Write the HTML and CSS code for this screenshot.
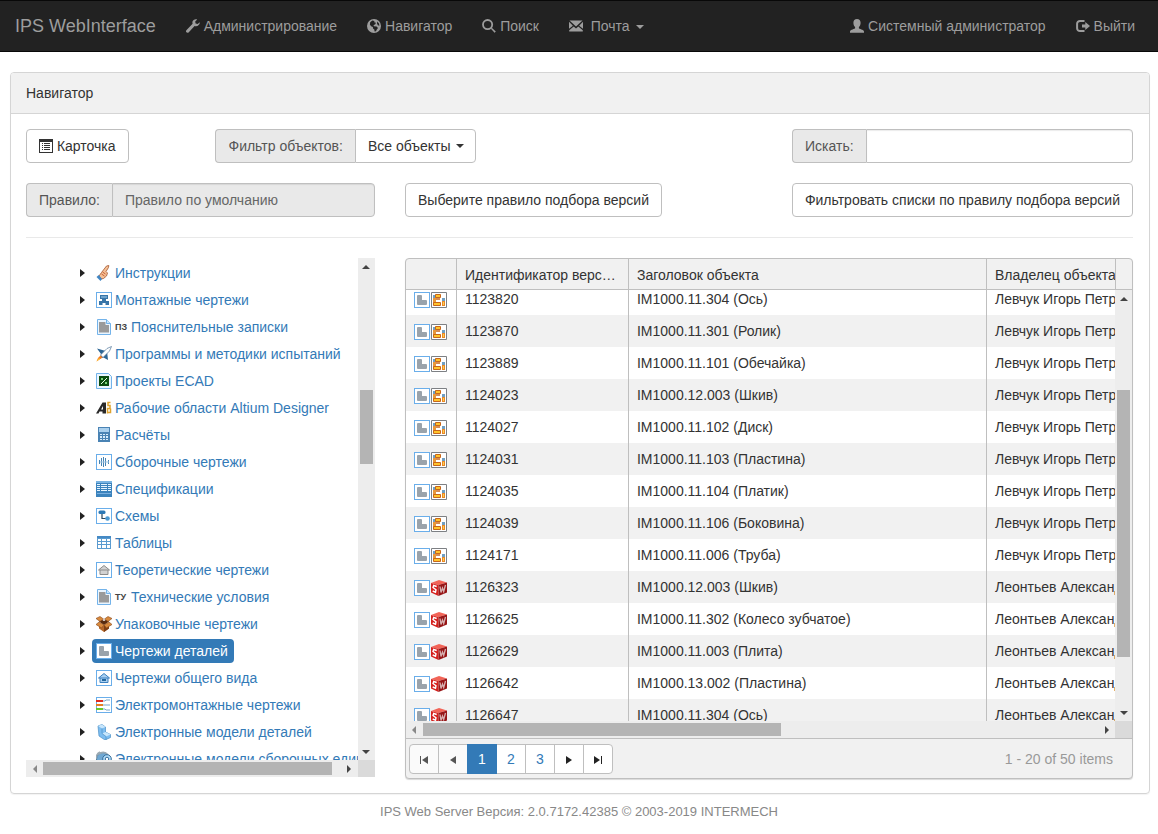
FILE: index.html
```
<!DOCTYPE html>
<html lang="ru">
<head>
    <meta charset="UTF-8">
    <meta name="viewport" content="width=device-width, initial-scale=1.0">
    <title>IPS WebInterface - Навигатор</title>
    <link rel="stylesheet" href="styles.css">
</head>
<body>
    <!-- Icon sprite -->
    <svg class="sprite" aria-hidden="true">
        <symbol id="i-wrench" viewBox="0 0 14 14"><path d="M13.8 3.2 11.6 5 9.6 4.4 9.2 2.4 11.2.4C9.2-.3 7 .6 6.5 2.6c-.2.8-.1 1.5.1 2.1L.6 10.900c-.8.8-.8 1.800-.2 2.400.7.7 1.700.6 2.400-.1L8.600 7.100c2.900.9 5.500-1.200 5.200-3.900z"/></symbol>
        <symbol id="i-globe" viewBox="0 0 14 14"><path fill-rule="evenodd" d="M7 0a7 7 0 1 0 0 14A7 7 0 0 0 7 0zM5.300 1.600 7.400 2.100 7.200 3.300 8.900 3.800 8.300 5.300 6.500 6.200 6.900 7.300 9.600 7.500 11 8.900 9.800 10.400 9 12.300 7.600 12.500 7.300 10.500 6 9.400 5.900 8 4.100 7.300 2.900 5.600 3.200 3.200zM10.200 2.500 12 4.500 12.400 6.700 10.900 6.200 10 4.600z"/></symbol>
        <symbol id="i-search" viewBox="0 0 14 14"><circle cx="5.600" cy="5.600" r="4.600" fill="none" stroke="currentColor" stroke-width="1.800"/><path d="M8.900 9.700 9.800 8.800 13.800 12.500 12.600 13.800z"/></symbol>
        <symbol id="i-mail" viewBox="0 0 14 14"><path d="M.5 1.500h13L7 7.600zM0 2.700 3.900 6.700 0 9.800zM14 2.700v7.100L10.100 6.700zM4.700 7.400 7 9.500 9.300 7.400 13.800 11.200V12.500H.2V11.200z"/></symbol>
        <symbol id="i-user" viewBox="0 0 14 14"><path d="M7 0c2.300 0 3.600 1.500 3.600 3.800 0 1.900-.6 3.400-1.700 4.300v1.200c0 .6 4.900 1.500 5.100 3.200v1.300H0v-1.300c.2-1.700 5.100-2.600 5.100-3.200V8.100C4 7.200 3.400 5.700 3.400 3.800 3.400 1.500 4.700 0 7 0z"/></symbol>
        <symbol id="i-logout" viewBox="0 0 14 14"><path d="M8.500 1.900H4a2.900 2.900 0 0 0-2.900 2.900v4.400A2.900 2.900 0 0 0 4 12.100h4.500" fill="none" stroke="currentColor" stroke-width="2"/><path d="M6 5.400H9.300V2.900L14 7 9.300 11.100V8.600H6z"/></symbol>
        <symbol id="i-card" viewBox="0 0 14 14"><path fill-rule="evenodd" d="M0 0h14v14H0zM1 3v10h12V3z"/><path d="M3 4h1v1H3zM5 4h6v1H5zM3 6h1v1H3zM5 6h6v1H5zM3 8h1v1H3zM5 8h6v1H5zM3 10h1v1H3zM5 10h6v1H5z"/></symbol>

        <symbol id="t-frame" viewBox="0 0 16 16"><rect x=".5" y=".5" width="15" height="15" fill="#fff" stroke="#6aaeea"/></symbol>
        <symbol id="t-hand" viewBox="0 0 16 16"><path d="M3 11 5.500 7.500 10.500 1 12.800.5 12.500 2.500 10 6.500 11.500 8 10.500 11 7.500 13.500 5 14z" fill="#f6c095" stroke="#a3552f" stroke-width=".8"/><path d="M6.500 7 9.500 9M5.500 9 8.500 11" stroke="#c76237" fill="none"/><path d="M.5 12 2.800 10 6 14 4.500 16z" fill="#4186c4"/></symbol>
        <symbol id="t-mount" viewBox="0 0 16 16"><use href="#t-frame"/><path d="M4 3h8v4h-2v2h3v4H9.500v-2h-3v2H3V9h3V7H4z" fill="#3875a8"/><path d="M5 4h6v2H5z" fill="#6fa3cc"/></symbol>
        <symbol id="t-doc" viewBox="0 0 16 16"><path d="M1.500.5h9l4 4v11h-13z" fill="#eaf5fe" stroke="#73b3ea"/><path d="M3 3h6.500v3H13v7.500H3z" fill="#9a9a9a"/><path d="M10.500.5v4h4" fill="#cce6fb" stroke="#73b3ea"/></symbol>
        <symbol id="t-rocket" viewBox="0 0 16 16"><path d="M1 2.500 8 4.500 11 5 12 14 7.500 11.500 4 12.500 5 8z" fill="#2c6595"/><path d="M15.500.5 13.500 5 7 11.500 4.500 9 11 2.500z" fill="#fff" stroke="#53799c" stroke-width=".7"/><path d="M4.500 9.500 6.500 11.500 3.500 13.500.5 15.500 2 12z" fill="#f47b20"/><path d="M3 12 4 13 .5 15.500z" fill="#ffce35"/></symbol>
        <symbol id="t-ecad" viewBox="0 0 16 16"><path d="M.5.5h12l3 3v12H.5z" fill="#eaf5fe" stroke="#73b3ea"/><path d="M3 3h10v10H3z" fill="#0b4d10"/><path d="M5 5h2v2H5zM9 9h2v2H9z" fill="#7ad47a"/><path d="m5 11 6-6" stroke="#e5ffe4"/></symbol>
        <symbol id="t-altium" viewBox="0 0 16 16"><path d="M0 13.500 6.500 2.500H10v11H6.500v-2h-3l-1 2z" fill="#292929"/><path d="M5 9.500 7 6v3.500z" fill="#fff"/><path d="M14.500 2.500h-2.500v3h2v3h-2.500v5M14.500 8.500v4h-3" fill="none" stroke="#dfa32e" stroke-width="1.500"/></symbol>
        <symbol id="t-calc" viewBox="0 0 16 16"><path d="M2 0h12v15H2z" fill="#4a83b4"/><path d="M3 1h10v4H3z" fill="#a9cfed"/><path d="M4 7h2v1H4zm3 0h2v1H7zm3 0h2v1h-2zM4 9h2v2H4zm3 0h2v2H7zm3 0h2v2h-2zM4 12h2v1H4zm3 0h2v1H7zm3 0h2v1h-2z" fill="#d8ecfb"/></symbol>
        <symbol id="t-assembly" viewBox="0 0 16 16"><use href="#t-frame"/><path d="M7.500 3v10M9.500 4v8M5.500 4v8M3.500 6v4M12.500 6v4" stroke="#4684b4" fill="none"/><path d="M4 8h9" stroke="#9dc3e0"/></symbol>
        <symbol id="t-spec" viewBox="0 0 16 16"><path d="M0 0h16v16H0z" fill="#3b83bd"/><path d="M1 3h3v1H1zm4 0h6v1H5zm7 0h3v1h-3zM1 5h3v1H1zm4 0h6v1H5zm7 0h3v1h-3zM1 7h3v1H1zm4 0h6v1H5zm7 0h3v1h-3zM1 9h3v1H1zm4 0h6v1H5zm7 0h3v1h-3z" fill="#e7f5ff"/><path d="M0 1h16" stroke="#79b4e2" stroke-width="2"/><path d="M1 12.500h14" stroke="#78afe0"/></symbol>
        <symbol id="t-scheme" viewBox="0 0 16 16"><use href="#t-frame"/><path d="M6 5.500v5h5" fill="none" stroke="#29475e" stroke-width="1.200"/><rect x="2.500" y="2.500" width="7" height="3.500" rx="1.500" fill="#2c79b6"/><circle cx="11.500" cy="10.500" r="2.300" fill="#4b9ad3"/></symbol>
        <symbol id="t-table" viewBox="0 0 16 16"><path d="M1 1h14v13H1z" fill="#5a9bd0"/><path d="M2 4h3v2H2zm4 0h4v2H6zm5 0h3v2h-3zM2 7h3v2H2zm4 0h4v2H6zm5 0h3v2h-3zM2 10h3v3H2zm4 0h4v3H6zm5 0h3v3h-3z" fill="#fff"/><path d="M1 1h14v2H1z" fill="#4589c4"/></symbol>
        <symbol id="t-house-gray" viewBox="0 0 16 16"><use href="#t-frame"/><path d="M2.500 8 8 3.500 13.500 8H12v4.500H4V8z" fill="#d2d2d2" stroke="#8b8b8b"/><path d="M4 8h8" stroke="#8b8b8b"/></symbol>
        <symbol id="t-box" viewBox="0 0 16 16"><path d="m3 7 5 2.500L13 7v5.500L8 16l-5-3.500z" fill="#b5672a"/><path d="M8 9.500 13 7v5.500L8 16z" fill="#7e3f15"/><path d="m3 5.500 2.500-2L8 5l2.500-1.500L13 5.500 8 9z" fill="#592b10"/><path d="M0 2.500 4 .5 7.500 3 4 5.500zM8.500 3 12 .5 16 2.500 12 5.500zM0 8.500 3 6l5 3-2.500 3zM16 8.500 13 6 8 9l2.500 3z" fill="#d98a3d" stroke="#87461b" stroke-width=".6"/></symbol>
        <symbol id="t-detail" viewBox="0 0 16 16"><use href="#t-frame"/><path d="M4 3h3q1 0 1 1v4h4q1 0 1 1v3q0 1-1 1H4q-1 0-1-1V4q0-1 1-1z" fill="#9aa3ab"/></symbol>
        <symbol id="t-house" viewBox="0 0 16 16"><use href="#t-frame"/><path d="M2.500 8 8 3.500 13.500 8H12v4.500H4V8z" fill="#a9d0f1" stroke="#3a7fbe"/><path d="M4 8h8" stroke="#3a7fbe"/><path d="M6 9h4v2H6z" fill="#24689f"/></symbol>
        <symbol id="t-wires" viewBox="0 0 16 16"><use href="#t-frame"/><path d="M7 4h2l1-1h4M7 8h7M7 12h2l1 1h4" stroke="#77a6c9" fill="none"/><path d="M0 4h7" stroke="#e02c20" stroke-width="2"/><path d="M0 8h7" stroke="#e77e20" stroke-width="2"/><path d="M0 12h7" stroke="#6ac72c" stroke-width="2"/></symbol>
        <symbol id="t-model" viewBox="0 0 16 16"><path d="M2 2 6 .5 9.500 3v5l5 2.500v3L9 16l-6-4z" fill="#7dbdf0" stroke="#4a8fc6" stroke-width=".7"/><path d="M2 2 6 .5 9.500 3 6 4.500zM6 9.500 9.500 8l5 2.500L10 12.500z" fill="#c8e6fb"/><path d="M6 4.500v5l4 3V16" fill="none" stroke="#4a8fc6" stroke-width=".7"/></symbol>
        <symbol id="t-gear" viewBox="0 0 16 16"><circle cx="7" cy="8" r="6.500" fill="#6fa8d3" stroke="#507590"/><path d="M2 3.500Q8-1 12 4M0 8q0-5 4-7" fill="none" stroke="#9aa9b3" stroke-width="1.500"/><circle cx="11" cy="8" r="4.300" fill="#b0ddfc" stroke="#356c98"/><circle cx="11" cy="8" r="1.800" fill="#fff" stroke="#356c98"/></symbol>
        <symbol id="t-cad" viewBox="0 0 16 16"><path d="M.5.5h15v15H.5z" fill="#fff" stroke="#7d8084"/><path d="M2 3h3v10H2z" fill="#e8973a"/><path d="M2 3h2v3H2z" fill="#6f9fc4"/><path d="M4.500 2.500h5v3h-5zM2.500 10.500h7v3h-7z" fill="#ffc42b" stroke="#c8661a"/><path d="M5 7h4" stroke="#c8661a" stroke-width="1.500"/><path d="M11 6h3v8h-3z" fill="#e98827"/><path d="M11 6h3v3h-3z" fill="#6f9fc4"/><path d="M12 10h1v3h-1z" fill="#ffd04e"/></symbol>
        <symbol id="t-sw" viewBox="0 0 16 16"><path d="M0 3 8 0l8 2.500L7.500 5z" fill="#f26457"/><path d="m0 3 7.500 2v11L0 12.500z" fill="#d5201d"/><path d="M7.500 5 16 2.500v10L7.500 16z" fill="#971617"/><path d="M5.700 6.500 2.700 5.500 2 7.500l3 2.200-.5 2.500L1.700 11" fill="none" stroke="#fff" stroke-width="1.400"/><path d="m9 6.500 1 6L11.500 8l1.200 3.500L14.500 5" fill="none" stroke="#d6b0b0" stroke-width="1.300"/></symbol>
    </svg>

    <header class="navbar">
        <a class="brand" href="#">IPS WebInterface</a>
        <nav class="nav">
            <a href="#"><svg class="glyph"><use href="#i-wrench"/></svg> Администрирование</a>
            <a href="#"><svg class="glyph"><use href="#i-globe"/></svg> Навигатор</a>
            <a href="#"><svg class="glyph"><use href="#i-search"/></svg> Поиск</a>
            <a href="#"><svg class="glyph"><use href="#i-mail"/></svg> &nbsp;Почта <span class="caret"></span></a>
        </nav>
        <nav class="nav nav-right">
            <a href="#"><svg class="glyph"><use href="#i-user"/></svg> Системный администратор</a>
            <a href="#"><svg class="glyph"><use href="#i-logout"/></svg> Выйти</a>
        </nav>
    </header>

    <main class="panel">
        <h1 class="panel-heading">Навигатор</h1>
        <div class="panel-body">
            <div class="toolbar">
                <div class="col-card">
                    <button class="btn" type="button"><svg class="glyph"><use href="#i-card"/></svg> Карточка</button>
                </div>
                <div class="input-group">
                    <label class="addon" for="objectFilter">Фильтр объектов:</label>
                    <div class="select-wrap">
                        <select class="control" id="objectFilter">
                            <option>Все объекты</option>
                        </select>
                        <span class="caret"></span>
                    </div>
                </div>
                <div class="input-group search">
                    <label class="addon" for="search">Искать:</label>
                    <input class="control" id="search" type="text">
                </div>
            </div>

            <div class="toolbar">
                <div class="input-group rule">
                    <label class="addon" for="rule">Правило:</label>
                    <input class="control" id="rule" type="text" value="Правило по умолчанию" disabled>
                </div>
                <button class="btn" type="button">Выберите правило подбора версий</button>
                <button class="btn push-right" type="button">Фильтровать списки по правилу подбора версий</button>
            </div>

            <hr>

            <div class="workspace">
                <section class="tree">
                    <ul class="tree-list">
                        <li><button class="expand" type="button" aria-label="Развернуть"></button><a href="#"><svg class="icon"><use href="#t-hand"/></svg>Инструкции</a></li>
                        <li><button class="expand" type="button" aria-label="Развернуть"></button><a href="#"><svg class="icon"><use href="#t-mount"/></svg>Монтажные чертежи</a></li>
                        <li><button class="expand" type="button" aria-label="Развернуть"></button><a href="#"><svg class="icon"><use href="#t-doc"/></svg><span class="doc-type">ПЗ</span>Пояснительные записки</a></li>
                        <li><button class="expand" type="button" aria-label="Развернуть"></button><a href="#"><svg class="icon"><use href="#t-rocket"/></svg>Программы и методики испытаний</a></li>
                        <li><button class="expand" type="button" aria-label="Развернуть"></button><a href="#"><svg class="icon"><use href="#t-ecad"/></svg>Проекты ECAD</a></li>
                        <li><button class="expand" type="button" aria-label="Развернуть"></button><a href="#"><svg class="icon"><use href="#t-altium"/></svg>Рабочие области Altium Designer</a></li>
                        <li><button class="expand" type="button" aria-label="Развернуть"></button><a href="#"><svg class="icon"><use href="#t-calc"/></svg>Расчёты</a></li>
                        <li><button class="expand" type="button" aria-label="Развернуть"></button><a href="#"><svg class="icon"><use href="#t-assembly"/></svg>Сборочные чертежи</a></li>
                        <li><button class="expand" type="button" aria-label="Развернуть"></button><a href="#"><svg class="icon"><use href="#t-spec"/></svg>Спецификации</a></li>
                        <li><button class="expand" type="button" aria-label="Развернуть"></button><a href="#"><svg class="icon"><use href="#t-scheme"/></svg>Схемы</a></li>
                        <li><button class="expand" type="button" aria-label="Развернуть"></button><a href="#"><svg class="icon"><use href="#t-table"/></svg>Таблицы</a></li>
                        <li><button class="expand" type="button" aria-label="Развернуть"></button><a href="#"><svg class="icon"><use href="#t-house-gray"/></svg>Теоретические чертежи</a></li>
                        <li><button class="expand" type="button" aria-label="Развернуть"></button><a href="#"><svg class="icon"><use href="#t-doc"/></svg><span class="doc-type">ТУ</span>Технические условия</a></li>
                        <li><button class="expand" type="button" aria-label="Развернуть"></button><a href="#"><svg class="icon"><use href="#t-box"/></svg>Упаковочные чертежи</a></li>
                        <li><button class="expand" type="button" aria-label="Развернуть"></button><a class="selected" href="#"><svg class="icon"><use href="#t-detail"/></svg>Чертежи деталей</a></li>
                        <li><button class="expand" type="button" aria-label="Развернуть"></button><a href="#"><svg class="icon"><use href="#t-house"/></svg>Чертежи общего вида</a></li>
                        <li><button class="expand" type="button" aria-label="Развернуть"></button><a href="#"><svg class="icon"><use href="#t-wires"/></svg>Электромонтажные чертежи</a></li>
                        <li><button class="expand" type="button" aria-label="Развернуть"></button><a href="#"><svg class="icon"><use href="#t-model"/></svg>Электронные модели деталей</a></li>
                        <li><button class="expand" type="button" aria-label="Развернуть"></button><a href="#"><svg class="icon"><use href="#t-gear"/></svg>Электронные модели сборочных единиц</a></li>
                    </ul>
                    <div class="scroll-y"><span class="arrow up"></span><div class="track"><div class="thumb"></div></div><span class="arrow down"></span></div>
                    <div class="scroll-x"><span class="arrow left"></span><div class="track"><div class="thumb"></div></div><span class="arrow right"></span></div>
                    <div class="scroll-corner"></div>
                </section>

                <section class="grid">
                    <div class="grid-header">
                        <div class="grid-header-wrap">
                            <table class="grid-table">
                                <colgroup><col class="c-icon"><col class="c-id"><col class="c-title"><col class="c-owner"></colgroup>
                                <thead>
                                    <tr><th></th><th>Идентификатор версии объекта</th><th>Заголовок объекта</th><th>Владелец объекта</th></tr>
                                </thead>
                            </table>
                        </div>
                    </div>
                    <div class="grid-content">
                        <table class="grid-table">
                            <colgroup><col class="c-icon"><col class="c-id"><col class="c-title"><col class="c-owner"></colgroup>
                            <tbody>
                                <tr><td><svg class="icon"><use href="#t-detail"/></svg><svg class="icon"><use href="#t-cad"/></svg></td><td>1123820</td><td>IM1000.11.304 (Ось)</td><td>Левчук Игорь Петрович</td></tr>
                                <tr><td><svg class="icon"><use href="#t-detail"/></svg><svg class="icon"><use href="#t-cad"/></svg></td><td>1123870</td><td>IM1000.11.301 (Ролик)</td><td>Левчук Игорь Петрович</td></tr>
                                <tr><td><svg class="icon"><use href="#t-detail"/></svg><svg class="icon"><use href="#t-cad"/></svg></td><td>1123889</td><td>IM1000.11.101 (Обечайка)</td><td>Левчук Игорь Петрович</td></tr>
                                <tr><td><svg class="icon"><use href="#t-detail"/></svg><svg class="icon"><use href="#t-cad"/></svg></td><td>1124023</td><td>IM1000.12.003 (Шкив)</td><td>Левчук Игорь Петрович</td></tr>
                                <tr><td><svg class="icon"><use href="#t-detail"/></svg><svg class="icon"><use href="#t-cad"/></svg></td><td>1124027</td><td>IM1000.11.102 (Диск)</td><td>Левчук Игорь Петрович</td></tr>
                                <tr><td><svg class="icon"><use href="#t-detail"/></svg><svg class="icon"><use href="#t-cad"/></svg></td><td>1124031</td><td>IM1000.11.103 (Пластина)</td><td>Левчук Игорь Петрович</td></tr>
                                <tr><td><svg class="icon"><use href="#t-detail"/></svg><svg class="icon"><use href="#t-cad"/></svg></td><td>1124035</td><td>IM1000.11.104 (Платик)</td><td>Левчук Игорь Петрович</td></tr>
                                <tr><td><svg class="icon"><use href="#t-detail"/></svg><svg class="icon"><use href="#t-cad"/></svg></td><td>1124039</td><td>IM1000.11.106 (Боковина)</td><td>Левчук Игорь Петрович</td></tr>
                                <tr><td><svg class="icon"><use href="#t-detail"/></svg><svg class="icon"><use href="#t-cad"/></svg></td><td>1124171</td><td>IM1000.11.006 (Труба)</td><td>Левчук Игорь Петрович</td></tr>
                                <tr><td><svg class="icon"><use href="#t-detail"/></svg><svg class="icon"><use href="#t-sw"/></svg></td><td>1126323</td><td>IM1000.12.003 (Шкив)</td><td>Леонтьев Александр</td></tr>
                                <tr><td><svg class="icon"><use href="#t-detail"/></svg><svg class="icon"><use href="#t-sw"/></svg></td><td>1126625</td><td>IM1000.11.302 (Колесо зубчатое)</td><td>Леонтьев Александр</td></tr>
                                <tr><td><svg class="icon"><use href="#t-detail"/></svg><svg class="icon"><use href="#t-sw"/></svg></td><td>1126629</td><td>IM1000.11.003 (Плита)</td><td>Леонтьев Александр</td></tr>
                                <tr><td><svg class="icon"><use href="#t-detail"/></svg><svg class="icon"><use href="#t-sw"/></svg></td><td>1126642</td><td>IM1000.13.002 (Пластина)</td><td>Леонтьев Александр</td></tr>
                                <tr><td><svg class="icon"><use href="#t-detail"/></svg><svg class="icon"><use href="#t-sw"/></svg></td><td>1126647</td><td>IM1000.11.304 (Ось)</td><td>Леонтьев Александр</td></tr>
                            </tbody>
                        </table>
                    </div>
                    <div class="scroll-y"><span class="arrow up"></span><div class="track"><div class="thumb"></div></div><span class="arrow down"></span></div>
                    <div class="scroll-x"><span class="arrow left"></span><div class="track"><div class="thumb"></div></div><span class="arrow right"></span></div>
                    <div class="scroll-corner"></div>
                    <div class="pager">
                        <div class="pages">
                            <button type="button" disabled aria-label="Первая"><svg class="page-icon" viewBox="0 0 8 8"><path d="M0 0h1v8H0zM8 0v8L2 4z"/></svg></button>
                            <button type="button" disabled aria-label="Назад"><svg class="page-icon" viewBox="0 0 8 8"><path d="M7 0v8L1 4z"/></svg></button>
                            <button class="current" type="button">1</button>
                            <button type="button">2</button>
                            <button type="button">3</button>
                            <button type="button" aria-label="Вперёд"><svg class="page-icon" viewBox="0 0 8 8"><path d="M1 0v8l6-4z"/></svg></button>
                            <button type="button" aria-label="Последняя"><svg class="page-icon" viewBox="0 0 8 8"><path d="M7 0h1v8H7zM0 0v8l6-4z"/></svg></button>
                        </div>
                        <span class="pager-info">1 - 20 of 50 items</span>
                    </div>
                </section>
            </div>
        </div>
    </main>

    <footer class="footer">IPS Web Server Версия: 2.0.7172.42385 © 2003-2019 INTERMECH</footer>
</body>
</html>
```
FILE: styles.css
```
* {
    box-sizing: border-box;
}
body {
    margin: 0;
    font-family: "Liberation Sans", Arial, sans-serif;
    font-size: 14px;
    line-height: 20px;
    color: #333;
    background-color: #fff;
}
a {
    color: #337ab7;
    text-decoration: none;
}
button, input, select {
    font: inherit;
    color: inherit;
}
.sprite {
    display: none;
}
.glyph {
    width: 14px;
    height: 14px;
    fill: currentColor;
    vertical-align: -2px;
}
.icon {
    flex: none;
    width: 16px;
    height: 16px;
}
.caret {
    display: inline-block;
    margin-left: 2px;
    border: 4px solid transparent;
    border-top-color: currentColor;
    border-bottom: 0;
    vertical-align: middle;
}

/* Navbar */
.navbar {
    display: flex;
    align-items: center;
    min-height: 52px;
    padding-right: 8px;
    background-color: #222;
    border: solid #080808;
    border-width: 1px 0;
}
.navbar a {
    padding: 15px;
    color: #9d9d9d;
    white-space: nowrap;
}
.navbar .brand {
    font-size: 18px;
}
.nav {
    display: flex;
}
.nav-right {
    margin-left: auto;
}

/* Panel */
.panel {
    margin: 20px 8px 0 10px;
    border: 1px solid #d5d5d5;
    border-radius: 4px;
    box-shadow: 0 1px 1px rgba(0, 0, 0, 0.05);
}
.panel-heading {
    margin: 0;
    padding: 10px 15px;
    font-size: 14px;
    font-weight: normal;
    background-color: #f1f1f1;
    border-bottom: 1px solid #d5d5d5;
    border-radius: 3px 3px 0 0;
}
.panel-body {
    padding: 15px 16px 14px 15px;
}
.toolbar {
    display: flex;
    margin-bottom: 20px;
}
.col-card {
    width: calc((100% + 30px) / 6);
}
.btn {
    height: 34px;
    padding: 6px 12px;
    background-color: #fff;
    border: 1px solid #bfbfbf;
    border-radius: 4px;
    white-space: nowrap;
}
.push-right {
    margin-left: auto;
}
.input-group {
    display: flex;
    height: 34px;
}
.addon {
    padding: 6px 12px;
    color: #555;
    background-color: #e9e9e9;
    border: 1px solid #bfbfbf;
    border-right: 0;
    border-radius: 4px 0 0 4px;
    white-space: nowrap;
}
.control {
    width: 100%;
    min-width: 0;
    height: 34px;
    padding: 6px 12px;
    background-color: #fff;
    border: 1px solid #bfbfbf;
    border-radius: 0 4px 4px 0;
    box-shadow: inset 0 1px 1px rgba(0, 0, 0, 0.08);
}
.control:disabled {
    color: #666;
    background-color: #e9e9e9;
}
.select-wrap {
    position: relative;
}
.select-wrap .control {
    appearance: none;
    padding-right: 24px;
    box-shadow: none;
}
.select-wrap .caret {
    position: absolute;
    top: 15px;
    right: 12px;
    pointer-events: none;
}
.search {
    flex: 0 1 341px;
    margin-left: auto;
}
.rule {
    width: calc((100% - 60px) / 3);
    margin-right: 30px;
}
hr {
    margin: 0 0 20px;
    border: 0;
    border-top: 1px solid #e9e9e9;
}
.workspace {
    display: grid;
    grid-template-columns: calc((100% - 60px) / 3) minmax(0, 1fr);
    column-gap: 30px;
    align-items: start;
}

/* Object tree */
.tree {
    display: grid;
    grid-template-columns: minmax(0, 1fr) 17px;
    grid-template-rows: 502px 17px;
}
.tree-list {
    margin: 0;
    padding: 1px 0 0 52px;
    list-style: none;
    overflow: hidden;
}
.tree-list li {
    display: flex;
    align-items: center;
    height: 27px;
}
.tree-list a {
    display: flex;
    align-items: center;
    gap: 3px;
    height: 24px;
    padding: 0 6px 0 4px;
    border-radius: 4px;
    white-space: nowrap;
}
.tree-list .selected {
    color: #fff;
    background-color: #337ab7;
}
.expand {
    flex: none;
    width: 14px;
    height: 16px;
    padding: 0 0 0 2px;
    background: none;
    border: 0;
}
.expand::before {
    content: "";
    display: block;
    width: 0;
    border: 4px solid transparent;
    border-left: 5px solid #222;
    border-right: 0;
}
.doc-type {
    width: 13px;
    font-size: 9px;
    font-weight: bold;
    color: #444;
}

/* Scrollbars */
.scroll-y, .scroll-x {
    display: flex;
    background-color: #ededed;
}
.scroll-y {
    flex-direction: column;
}
.track {
    flex: 1;
    min-width: 0;
    min-height: 0;
}
.thumb {
    background-color: #b4b4b4;
}
.scroll-y .thumb {
    width: 13px;
    margin: 0 2px;
}
.scroll-x .thumb {
    height: 13px;
    margin: 2px 0;
}
.arrow {
    display: grid;
    place-items: center;
    flex: none;
    width: 17px;
    height: 17px;
}
.arrow::before {
    content: "";
    border: 4px solid transparent;
}
.arrow.up::before {
    border-bottom-color: #444;
    border-top: 0;
}
.arrow.down::before {
    border-top-color: #444;
    border-bottom: 0;
}
.arrow.left::before {
    border-right-color: #888;
    border-left: 0;
}
.arrow.right::before {
    border-left-color: #444;
    border-right: 0;
}
.scroll-corner {
    background-color: #dadada;
}
.tree .scroll-y .thumb {
    height: 74px;
    margin-top: 115px;
}
.tree .scroll-x .thumb {
    width: 97%;
}

/* Object grid */
.grid {
    display: grid;
    grid-template-columns: minmax(0, 1fr) 17px;
    grid-template-rows: 31px 431px 17px auto;
    background-color: #f1f1f1;
    border: 1px solid #bfbfbf;
    border-radius: 4px;
    box-shadow: 0 1px 1px rgba(0, 0, 0, 0.15);
}
.grid-header {
    grid-column: 1 / -1;
    padding-right: 16px;
    border-bottom: 1px solid #bfbfbf;
}
.grid-header-wrap {
    border-right: 1px solid #bfbfbf;
    overflow: hidden;
}
.grid-header, .grid-content {
    min-width: 0;
}
.grid-content {
    background-color: #fff;
    overflow: hidden;
}
.grid-table {
    width: 753px;
    border-collapse: separate;
    border-spacing: 0;
    table-layout: fixed;
}
.c-icon {
    width: 51px;
}
.c-id, .c-owner {
    width: 172px;
}
.c-title {
    width: 358px;
}
.grid-table th, .grid-table td {
    padding: 0 8px;
    border-right: 1px solid #bfbfbf;
    font-weight: normal;
    text-align: left;
    white-space: nowrap;
    overflow: hidden;
    text-overflow: ellipsis;
}
.grid-table th {
    height: 30px;
    padding-top: 2px;
}
.grid-table td {
    height: 32px;
}
.grid-table td:first-child {
    padding-right: 0;
    text-overflow: clip;
}
.grid-table td .icon {
    margin-right: 1px;
    vertical-align: middle;
}
.grid-table tr:nth-child(even) td {
    background-color: #f1f1f1;
}
/* list is scrolled down a little */
.grid-content .grid-table {
    margin-top: -7px;
}
.grid .scroll-y .thumb {
    height: 267px;
    margin-top: 83px;
}
.grid .scroll-x .thumb {
    width: 53%;
}

/* Pager */
.pager {
    display: flex;
    align-items: center;
    grid-column: 1 / -1;
    min-height: 40px;
    padding: 4px 19px 4px 3px;
    border-top: 1px solid #bfbfbf;
}
.pages {
    display: flex;
}
.pages button {
    width: 30px;
    height: 30px;
    margin-right: -1px;
    padding: 0;
    color: #337ab7;
    background-color: #fff;
    border: 1px solid #bfbfbf;
}
.pages button:first-child {
    border-radius: 4px 0 0 4px;
}
.pages button:last-child {
    border-radius: 0 4px 4px 0;
}
.pages button:disabled {
    background-color: #fafafa;
}
.pages .current {
    z-index: 1;
    color: #fff;
    background-color: #337ab7;
    border-color: #337ab7;
}
.page-icon {
    width: 8px;
    height: 8px;
    fill: #222;
}
.pages button:disabled .page-icon {
    fill: #555;
}
.pager-info {
    margin-left: auto;
    color: #999;
}
.footer {
    padding: 8px 10px;
    font-size: 13px;
    color: #888;
    text-align: center;
}
```
